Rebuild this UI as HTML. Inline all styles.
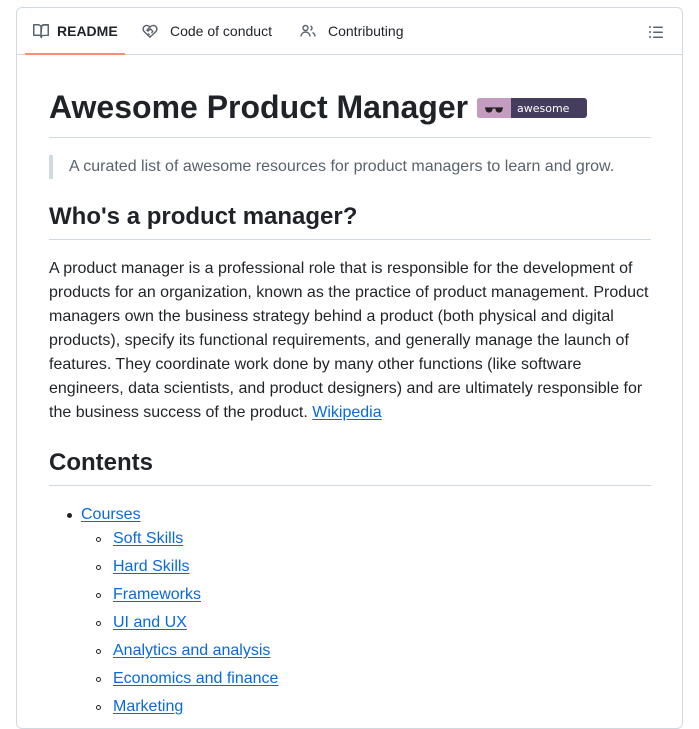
<!DOCTYPE html>
<html><head><meta charset="utf-8"><style>
body{margin:0;background:#fff;font-family:"Liberation Sans",Arial,sans-serif;color:#1f2328;width:699px;height:700px;overflow:hidden}
.box{position:absolute;left:16px;top:7px;width:665px;height:720px;border:1px solid #d1d9e0;border-radius:6px}
.tabs{height:46px;border-bottom:1px solid #d1d9e0;position:relative}
.tab{position:absolute;top:0;height:46px;line-height:46px;font-size:14px;display:flex;align-items:center;gap:8px}
.tab svg{width:16px;height:16px}
.ul{position:absolute;left:8px;width:100px;bottom:-1px;height:2px;background:#fd8c73}
.c{position:absolute;left:32px;width:602px;top:47px}
h1{font-size:32px;font-weight:bold;margin:0;position:absolute;top:32px;left:0;width:602px;height:50px;border-bottom:1px solid #d1d9e0;line-height:40px}
.badge{display:inline-block;vertical-align:middle;margin-left:0;position:relative;top:-2px}
.bq{position:absolute;top:100px;left:0;border-left:4px solid #d1d9e0;padding-left:16px;color:#59636e;font-size:16px;line-height:24px;height:24px}
h2{font-size:24px;font-weight:bold;margin:0;position:absolute;left:0;width:602px;border-bottom:1px solid #d1d9e0;line-height:30px;height:37px}
p{position:absolute;margin:0;font-size:16px;line-height:24px;top:202px;width:602px}
a{color:#0969da;text-decoration:underline;text-underline-offset:2px}
ul{position:absolute;margin:0;padding:0;list-style:none;font-size:16px;line-height:24px}
li{position:relative}
li.d::before{content:"";position:absolute;left:-14px;top:10px;width:5px;height:5px;border-radius:50%;background:#1f2328}
li.o{margin-top:4px}
li.o:first-child{margin-top:0}
li.o::before{content:"";position:absolute;left:-17px;top:10px;width:5px;height:5px;border-radius:50%;border:1px solid #1f2328;box-sizing:border-box}
</style></head><body>
<div class="box">
<div class="tabs">
<div class="tab" style="left:16px;font-weight:bold"><svg viewBox="0 0 16 16" fill="#59636e"><path d="M0 1.75A.75.75 0 0 1 .75 1h4.25c1.2 0 2.3.6 3 1.5C8.7 1.6 9.8 1 11 1h4.25a.75.75 0 0 1 .75.75v10.5a.75.75 0 0 1-.75.75H10.5c-.8 0-1.5.7-1.5 1.5a.75.75 0 0 1-1.5 0c0-.8-.7-1.5-1.5-1.5H.75a.75.75 0 0 1-.75-.75Zm7.25 10.25V4.25c0-1-.8-1.75-1.75-1.75H1.5v9h4.5c.5 0 .9.1 1.25.3Zm1.5 0c.4-.2.8-.3 1.25-.3h4.5v-9H11c-1 0-1.75.8-1.75 1.75Z"/></svg>README</div>
<div class="tab" style="left:125px;gap:12px"><svg viewBox="0 0 16 16" fill="none" stroke="#59636e" stroke-width="1.4"><path d="M8 14.2 2.2 8.6C.6 7 .8 4.3 2.7 3.1 4.3 2 6.5 2.4 8 4c1.5-1.6 3.7-2 5.3-.9 1.9 1.2 2.1 3.9.5 5.5Z"/><path d="M8 4 5.3 6.7c-.6.6.3 1.6 1 1.1L8.5 6l2.7 2.7M6 10.5l1.5 1.5M9.5 9l1 1"/></svg>Code of conduct</div>
<div class="tab" style="left:283px;gap:12px"><svg viewBox="0 0 16 16" fill="none" stroke="#59636e" stroke-width="1.4"><circle cx="5.5" cy="5" r="2.5"/><path d="M1 13.5c0-2.5 2-4.5 4.5-4.5s4.5 2 4.5 4.5"/><path d="M10.5 3a2.3 2.3 0 0 1 0 4.3M12.5 9.5c1.5.8 2.5 2.3 2.5 4"/></svg>Contributing</div>
<svg style="position:absolute;right:18px;top:16px" width="16" height="16" viewBox="0 0 16 16" fill="#59636e"><path d="M5.75 2.5h8.5a.75.75 0 0 1 0 1.5h-8.5a.75.75 0 0 1 0-1.5Zm0 5h8.5a.75.75 0 0 1 0 1.5h-8.5a.75.75 0 0 1 0-1.5Zm0 5h8.5a.75.75 0 0 1 0 1.5h-8.5a.75.75 0 0 1 0-1.5ZM2 14a1 1 0 1 1 0-2 1 1 0 0 1 0 2Zm1-6a1 1 0 1 1-2 0 1 1 0 0 1 2 0ZM2 4a1 1 0 1 1 0-2 1 1 0 0 1 0 2Z"/></svg>
<div class="ul"></div>
</div>
<div class="c">
<h1>Awesome Product Manager <svg class="badge" width="110" height="20" viewBox="0 0 110 20"><rect width="110" height="20" rx="3" fill="#453d5e"/><path d="M3 0h31v20H3a3 3 0 0 1-3-3V3a3 3 0 0 1 3-3Z" fill="#c49cbf"/><path d="M8 10h18M9 10c0 3 1 4 3 4s3-1 3-4ZM19 10c0 3 1 4 3 4s3-1 3-4Z" fill="#222" stroke="#222" stroke-width="1.2"/><text x="40" y="14" fill="#fff" font-size="11" font-family="DejaVu Sans,sans-serif" font-weight="normal">awesome</text></svg></h1>
<div class="bq">A curated list of awesome resources for product managers to learn and grow.</div>
<h2 style="top:147px">Who's a product manager?</h2>
<p>A product manager is a professional role that is responsible for the development of products for an organization, known as the practice of product management. Product managers own the business strategy behind a product (both physical and digital products), specify its functional requirements, and generally manage the launch of features. They coordinate work done by many other functions (like software engineers, data scientists, and product designers) and are ultimately responsible for the business success of the product. <a>Wikipedia</a></p>
<h2 style="top:393px">Contents</h2>
<ul style="left:32px;top:448px"><li class="d"><a>Courses</a>
<ul style="position:static;padding-left:32px">
<li class="o"><a>Soft Skills</a></li>
<li class="o"><a>Hard Skills</a></li>
<li class="o"><a>Frameworks</a></li>
<li class="o"><a>UI and UX</a></li>
<li class="o"><a>Analytics and analysis</a></li>
<li class="o"><a>Economics and finance</a></li>
<li class="o"><a>Marketing</a></li>
</ul></li></ul>
</div>
</div>
</body></html>
